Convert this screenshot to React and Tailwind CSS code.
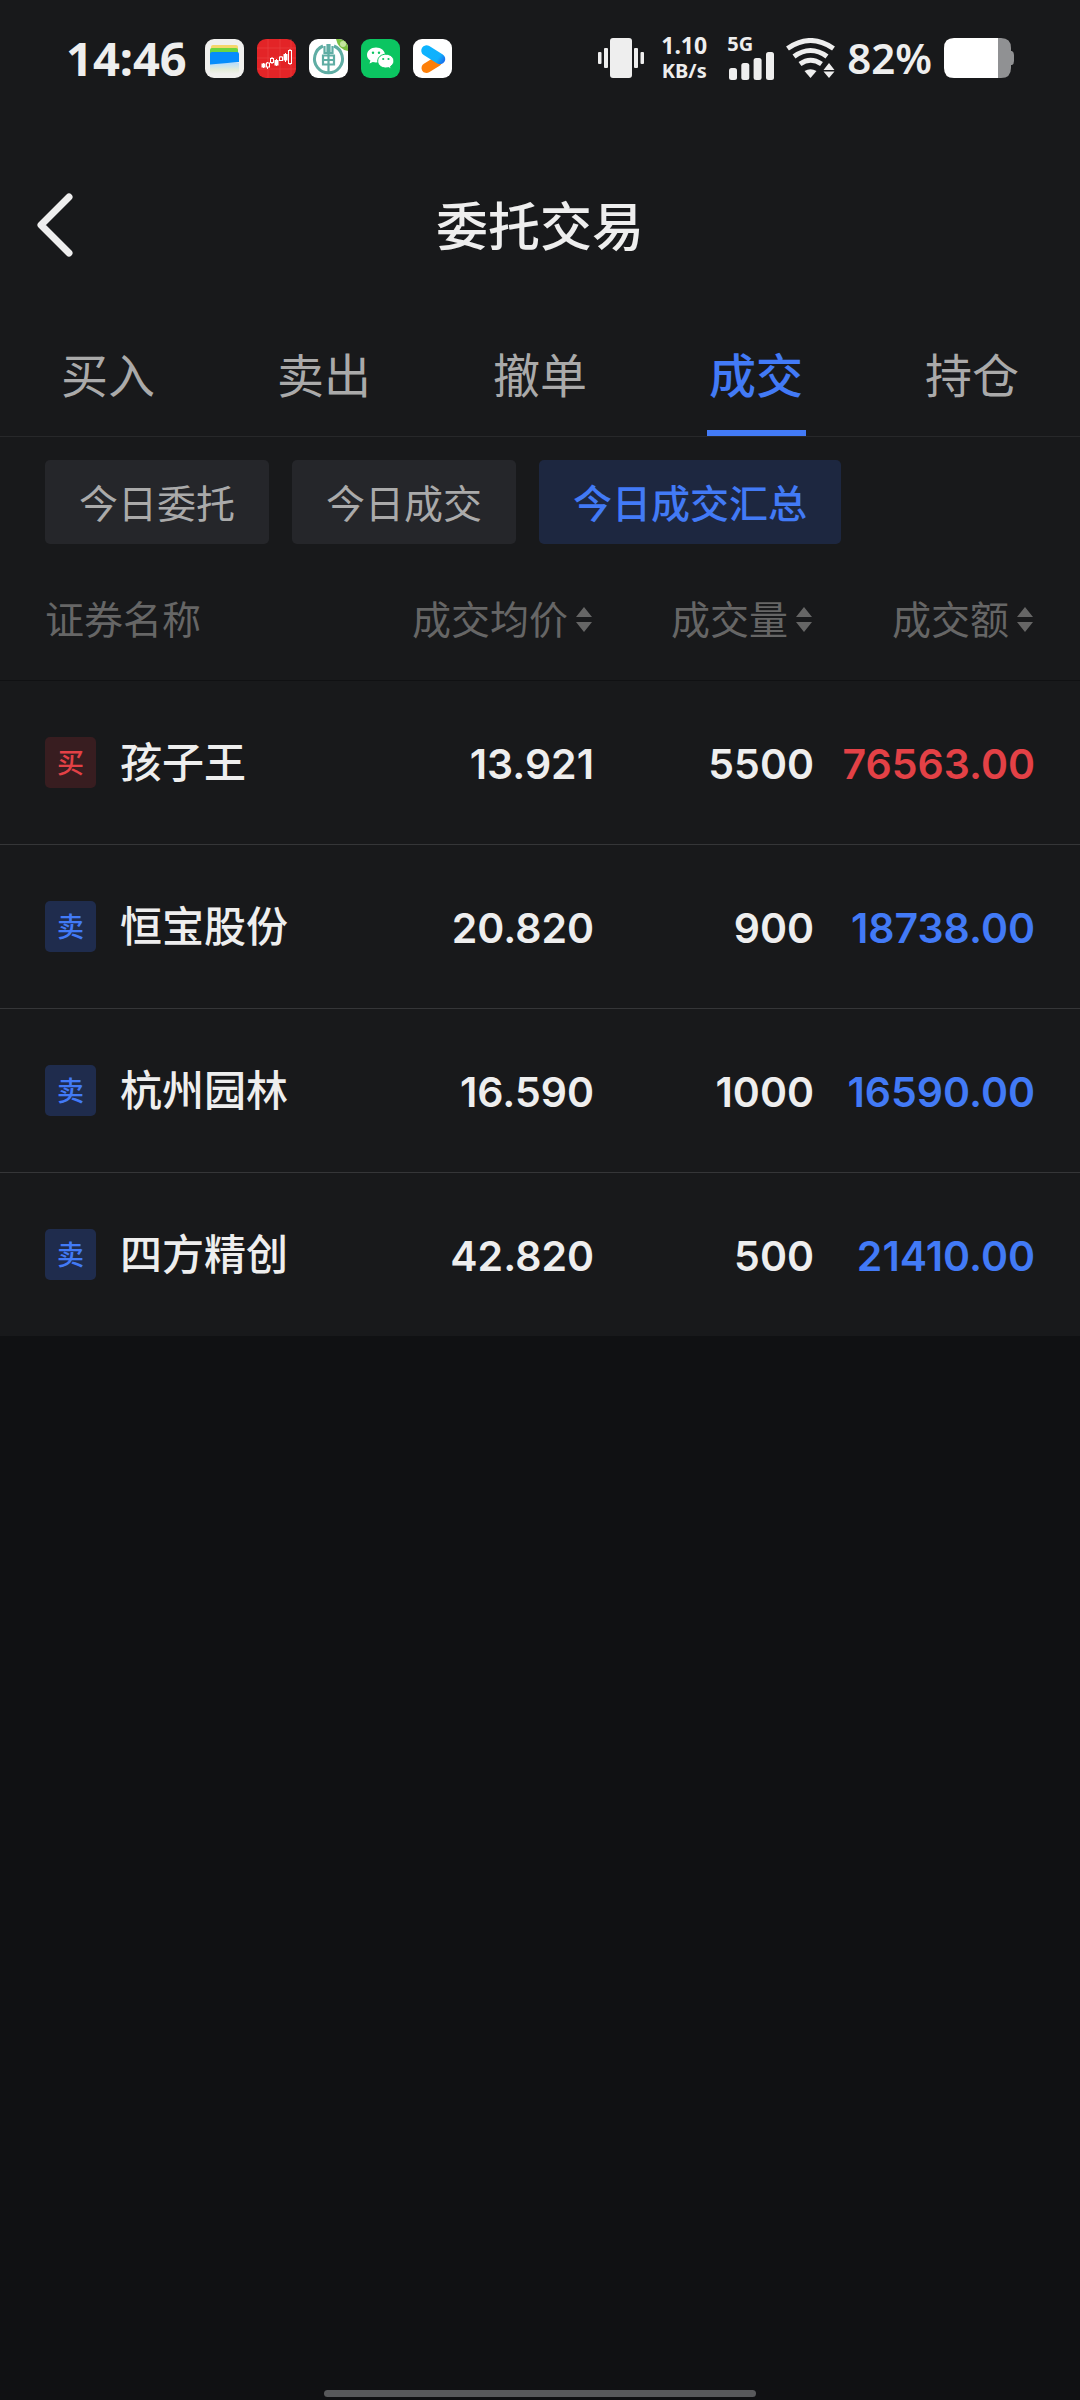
import React, { useState } from "react";

const tabs = ["买入", "卖出", "撤单", "成交", "持仓"];
const filters = ["今日委托", "今日成交", "今日成交汇总"];
const columns = ["成交均价", "成交量", "成交额"];
const trades = [
  { side: "买", name: "孩子王", price: "13.921", volume: "5500", amount: "76563.00" },
  { side: "卖", name: "恒宝股份", price: "20.820", volume: "900", amount: "18738.00" },
  { side: "卖", name: "杭州园林", price: "16.590", volume: "1000", amount: "16590.00" },
  { side: "卖", name: "四方精创", price: "42.820", volume: "500", amount: "21410.00" },
];

function WalletIcon() {
  return (
    <svg viewBox="0 0 39 39" className="size-[39px]" aria-hidden="true">
      <defs>
        <linearGradient id="walletGlow" x1="0" y1="0" x2="0" y2="1">
          <stop offset="0" stopColor="#b5dcfb" />
          <stop offset="0.6" stopColor="#e4ecd9" />
          <stop offset="1" stopColor="#f0f0ee" />
        </linearGradient>
      </defs>
      <rect width="39" height="39" rx="9" fill="#f0f0ee" />
      <path d="M5 24h29v8q0 3-3 3H8q-3 0-3-3z" fill="url(#walletGlow)" />
      <path d="M6 11V8q0-2 2-2h23q2 0 2 2v3z" fill="#f5d66a" />
      <path d="M5 15v-4q0-2 2-2h24q2 0 2 2v4z" fill="#6bd541" />
      <path d="M5 15q0-2 2-2h25q2 0 2 2v8L5 25.500z" fill="#068dfb" />
    </svg>
  );
}

function CandlesIcon() {
  return (
    <svg viewBox="0 0 39 39" className="size-[39px]" aria-hidden="true">
      <rect width="39" height="39" rx="9" fill="#e32427" />
      <g stroke="#ee5a58" strokeWidth="0.5" opacity="0.7">
        <path d="M0 9h39M0 19h39M0 30h39M11 0v39M23 0v39M34 0v39" />
      </g>
      <g stroke="#fff" strokeWidth="1" fill="none">
        <rect x="5" y="25" width="3" height="3" fill="#fff" />
        <path d="M6.500 24v5M10.500 23v7M15 18v7M19.500 20v7M24 17v5M28.500 14v9M33 10v16" />
        <rect x="9.500" y="24" width="3" height="4" fill="#e32427" />
        <rect x="13.500" y="19.500" width="3" height="4" fill="#e32427" />
        <rect x="18" y="21.500" width="3" height="4.500" fill="#fff" />
        <rect x="22.500" y="18" width="3" height="3.500" fill="#e32427" />
        <rect x="27" y="15.500" width="3" height="5.500" fill="#fff" />
        <rect x="31.500" y="11.500" width="3" height="13" fill="#e32427" />
      </g>
    </svg>
  );
}

function BankIcon() {
  return (
    <svg viewBox="0 0 39 39" className="size-[39px]" aria-hidden="true">
      <defs>
        <clipPath id="bankClip">
          <rect width="39" height="39" rx="9" />
        </clipPath>
      </defs>
      <g clipPath="url(#bankClip)">
        <rect width="39" height="39" fill="#fff" />
        <path d="M14 7A14 14 0 1 0 25 7" fill="none" stroke="#5fada4" strokeWidth="3" />
        <path d="M18.500 5v9h-3V7M20.500 5v9h3V7" fill="none" stroke="#5fada4" strokeWidth="2.200" />
        <path d="M14 16.500h11v9H14zM14 21h11M19.500 14v20" fill="none" stroke="#5fada4" strokeWidth="2.200" />
        <path d="M27 0h12v12Q29 10 27 0z" fill="#7cc142" />
        <circle cx="34" cy="5" r="3" fill="#c5e89f" />
      </g>
    </svg>
  );
}

function ChatIcon() {
  return (
    <svg viewBox="0 0 39 39" className="size-[39px]" aria-hidden="true">
      <rect width="39" height="39" rx="9" fill="#0bc561" />
      <path d="M15 8.500c-5 0-9 3.300-9 7.400 0 2.400 1.300 4.400 3.400 5.700l-.9 3 3.300-1.700c1 .3 2.100.5 3.200.5 5 0 9-3.300 9-7.500s-4-7.400-9-7.400z" fill="#fff" />
      <path d="M24.800 15.200c-4.500 0-8.100 3-8.100 6.900s3.600 6.900 8.100 6.900c1 0 1.900-.1 2.700-.4l2.800 1.500-.8-2.600c2-1.200 3.400-3.200 3.400-5.400 0-3.900-3.600-6.900-8.100-6.900z" fill="#fff" stroke="#0bc561" strokeWidth="1" />
      <g fill="#0bc561">
        <circle cx="12" cy="13.800" r="1.200" />
        <circle cx="18" cy="13.800" r="1.200" />
        <circle cx="22.200" cy="20" r="1.100" />
        <circle cx="27.500" cy="20" r="1.100" />
      </g>
    </svg>
  );
}

function VideoIcon() {
  return (
    <svg viewBox="0 0 39 39" className="size-[39px]" aria-hidden="true">
      <defs>
        <linearGradient id="videoBlue" gradientUnits="userSpaceOnUse" x1="9" y1="8" x2="32" y2="24">
          <stop offset="0" stopColor="#0cb4ff" />
          <stop offset="0.700" stopColor="#10b0fc" />
          <stop offset="1" stopColor="#1b5fe8" />
        </linearGradient>
      </defs>
      <rect width="39" height="39" rx="9" fill="#fff" />
      <path d="M13.500 29L24 22.500" stroke="#fd7f08" strokeWidth="10" strokeLinecap="round" />
      <path d="M13.500 11.500L27 20" stroke="url(#videoBlue)" strokeWidth="10.500" strokeLinecap="round" />
    </svg>
  );
}

function VibrateIcon() {
  return (
    <svg viewBox="0 0 46 40" className="h-[40px] w-[46px]" fill="#eee" aria-hidden="true">
      <rect x="12" width="22" height="40" rx="3" />
      <rect x="6" y="10" width="4" height="20" rx="1" />
      <rect x="36" y="10" width="4" height="20" rx="1" />
      <rect y="14" width="3.500" height="12" rx="1" />
      <rect x="42.500" y="14" width="3.500" height="12" rx="1" />
    </svg>
  );
}

function SignalIcon() {
  return (
    <svg viewBox="0 0 45 28" className="ml-[2px] h-[28px] w-[45px]" fill="#eee" aria-hidden="true">
      <rect y="16" width="8" height="12" rx="2.500" />
      <rect x="12.300" y="11" width="8" height="17" rx="2.500" />
      <rect x="24.600" y="6" width="8" height="22" rx="2.500" />
      <rect x="37" width="8" height="28" rx="2.500" />
    </svg>
  );
}

function WifiIcon() {
  return (
    <svg viewBox="0 0 49 40" className="h-[40px] w-[49px]" aria-hidden="true">
      <g fill="none" stroke="#eee" strokeWidth="5">
        <path d="M1.500 10.500Q24.500-5.500 47.500 10.500" />
        <path d="M8 18.500Q24.500 6.500 41 18.500" />
        <path d="M14 26Q24.500 18.500 35.500 26" />
      </g>
      <path d="M18.500 33q6-3.500 12 0l-6 7z" fill="#eee" />
      <path d="M43 25l5.500 7h-11zM43 40l5.500-6.500h-11z" fill="#eee" />
    </svg>
  );
}

function BatteryIcon() {
  return (
    <svg viewBox="0 0 70 40" className="h-[40px] w-[70px]" aria-hidden="true">
      <path d="M54 0h3q10 0 10 10v3h1q2 1 2 4v6q0 3-2 4h-1v3q0 10-10 10h-3z" fill="#909193" />
      <path d="M54 0H10Q0 0 0 10v20q0 10 10 10h44z" fill="#fff" />
    </svg>
  );
}

function SortIcon() {
  return (
    <svg viewBox="0 0 18 26" className="h-[26px] w-[18px]" fill="#666" aria-hidden="true">
      <path d="M9 1l8 10H1zM9 26l8-10H1z" />
    </svg>
  );
}

function StatusBar() {
  return (
    <div className="mb-[22px] flex h-[116px] items-center justify-between px-[66px] text-[#eee]">
      <div className="flex items-center gap-[13px]">
        <span className="mr-[5px] text-[47px] leading-none font-bold">14:46</span>
        <WalletIcon />
        <CandlesIcon />
        <BankIcon />
        <ChatIcon />
        <VideoIcon />
      </div>
      <div className="flex items-center gap-[12px]">
        <VibrateIcon />
        <div className="ml-[5px] flex flex-col items-center font-bold">
          <span className="text-[23px] leading-[25px]">1.10</span>
          <span className="text-[20px] leading-[25px]">KB/s</span>
        </div>
        <div className="ml-[8px] flex flex-col">
          <span className="text-[20px] leading-[16px] font-bold">5G</span>
          <SignalIcon />
        </div>
        <WifiIcon />
        <span className="text-[42px] leading-none font-semibold">82%</span>
        <BatteryIcon />
      </div>
    </div>
  );
}

export default function App() {
  const [tab, setTab] = useState(3);
  const [filter, setFilter] = useState(2);

  return (
    <div className="flex min-h-screen flex-col bg-[#101113] font-['Noto_Sans','Noto_Sans_CJK_SC',sans-serif]">
      <main className="bg-[#18191b]">
        <StatusBar />

        <header className="grid h-[176px] grid-cols-[1fr_auto_1fr] items-center px-[36px]">
          <button type="button" aria-label="返回" className="justify-self-start">
            <svg viewBox="0 0 40 66" className="h-[66px] w-[40px]" fill="none" aria-hidden="true">
              <path d="M33 4L5 32l28 28" stroke="#eee" strokeWidth="7" strokeLinecap="round" strokeLinejoin="round" />
            </svg>
          </button>
          <h1 className="text-[52px] leading-none font-medium text-[#eee]">委托交易</h1>
        </header>

        <nav className="grid h-[123px] grid-cols-5 border-b border-[#27282a]">
          {tabs.map((label, i) => (
            <button
              key={label}
              type="button"
              onClick={() => setTab(i)}
              className={`relative flex items-center justify-center text-[47px] leading-none ${
                i === tab ? "font-medium text-[#427af6]" : "text-[#aaa]"
              }`}
            >
              {label}
              {i === tab && <span className="absolute bottom-0 h-[6px] w-[99px] bg-[#427af6]" />}
            </button>
          ))}
        </nav>

        <div className="flex gap-[23px] px-[45px] pt-[23px] pb-[14px]">
          {filters.map((label, i) => (
            <button
              key={label}
              type="button"
              onClick={() => setFilter(i)}
              className={`h-[84px] rounded-[5px] px-[34px] text-[39px] leading-none ${
                i === filter ? "bg-[#1d2740] font-medium text-[#427af6]" : "bg-[#25262a] text-[#aaa]"
              }`}
            >
              {label}
            </button>
          ))}
        </div>

        <table className="w-full table-fixed border-collapse">
          <colgroup>
            <col />
            <col className="w-[220px]" />
            <col className="w-[220px]" />
            <col className="w-[266px]" />
          </colgroup>
          <thead>
            <tr className="h-[122px] border-b border-[#101113] text-[39px] leading-none text-[#666]">
              <th scope="col" className="pl-[45px] text-left font-normal">
                证券名称
              </th>
              {columns.map((label) => (
                <th key={label} scope="col" className="font-normal last:pr-[45px]">
                  <button type="button" className="flex w-full items-center justify-end gap-[7px] pr-[1px] whitespace-nowrap">
                    {label}
                    <SortIcon />
                  </button>
                </th>
              ))}
            </tr>
          </thead>
          <tbody>
            {trades.map((t) => (
              <tr
                key={t.name}
                className="h-[164px] border-b border-[#353638] text-right font-['Inter',sans-serif] text-[41px] leading-none font-semibold text-[#eee] last:border-b-0"
              >
                <td className="pl-[45px]">
                  <div className="flex items-center gap-[24px] font-['Noto_Sans','Noto_Sans_CJK_SC',sans-serif] text-[42px] font-medium whitespace-nowrap">
                    <span
                      className={`flex size-[51px] items-center justify-center rounded-[5px] text-[27px] ${
                        t.side === "买" ? "bg-[#381d20] text-[#e34146]" : "bg-[#1f2c4d] text-[#427af6]"
                      }`}
                    >
                      {t.side}
                    </span>
                    {t.name}
                  </div>
                </td>
                <td className="pt-[4px]">{t.price}</td>
                <td className="pt-[4px]">{t.volume}</td>
                <td className={`pt-[4px] pr-[45px] ${t.side === "买" ? "text-[#e34146]" : "text-[#427af6]"}`}>
                  {t.amount}
                </td>
              </tr>
            ))}
          </tbody>
        </table>
      </main>
      <div className="mx-auto mt-auto mb-[3px] h-[7px] w-2/5 rounded-full bg-[#58595b]" />
    </div>
  );
}
